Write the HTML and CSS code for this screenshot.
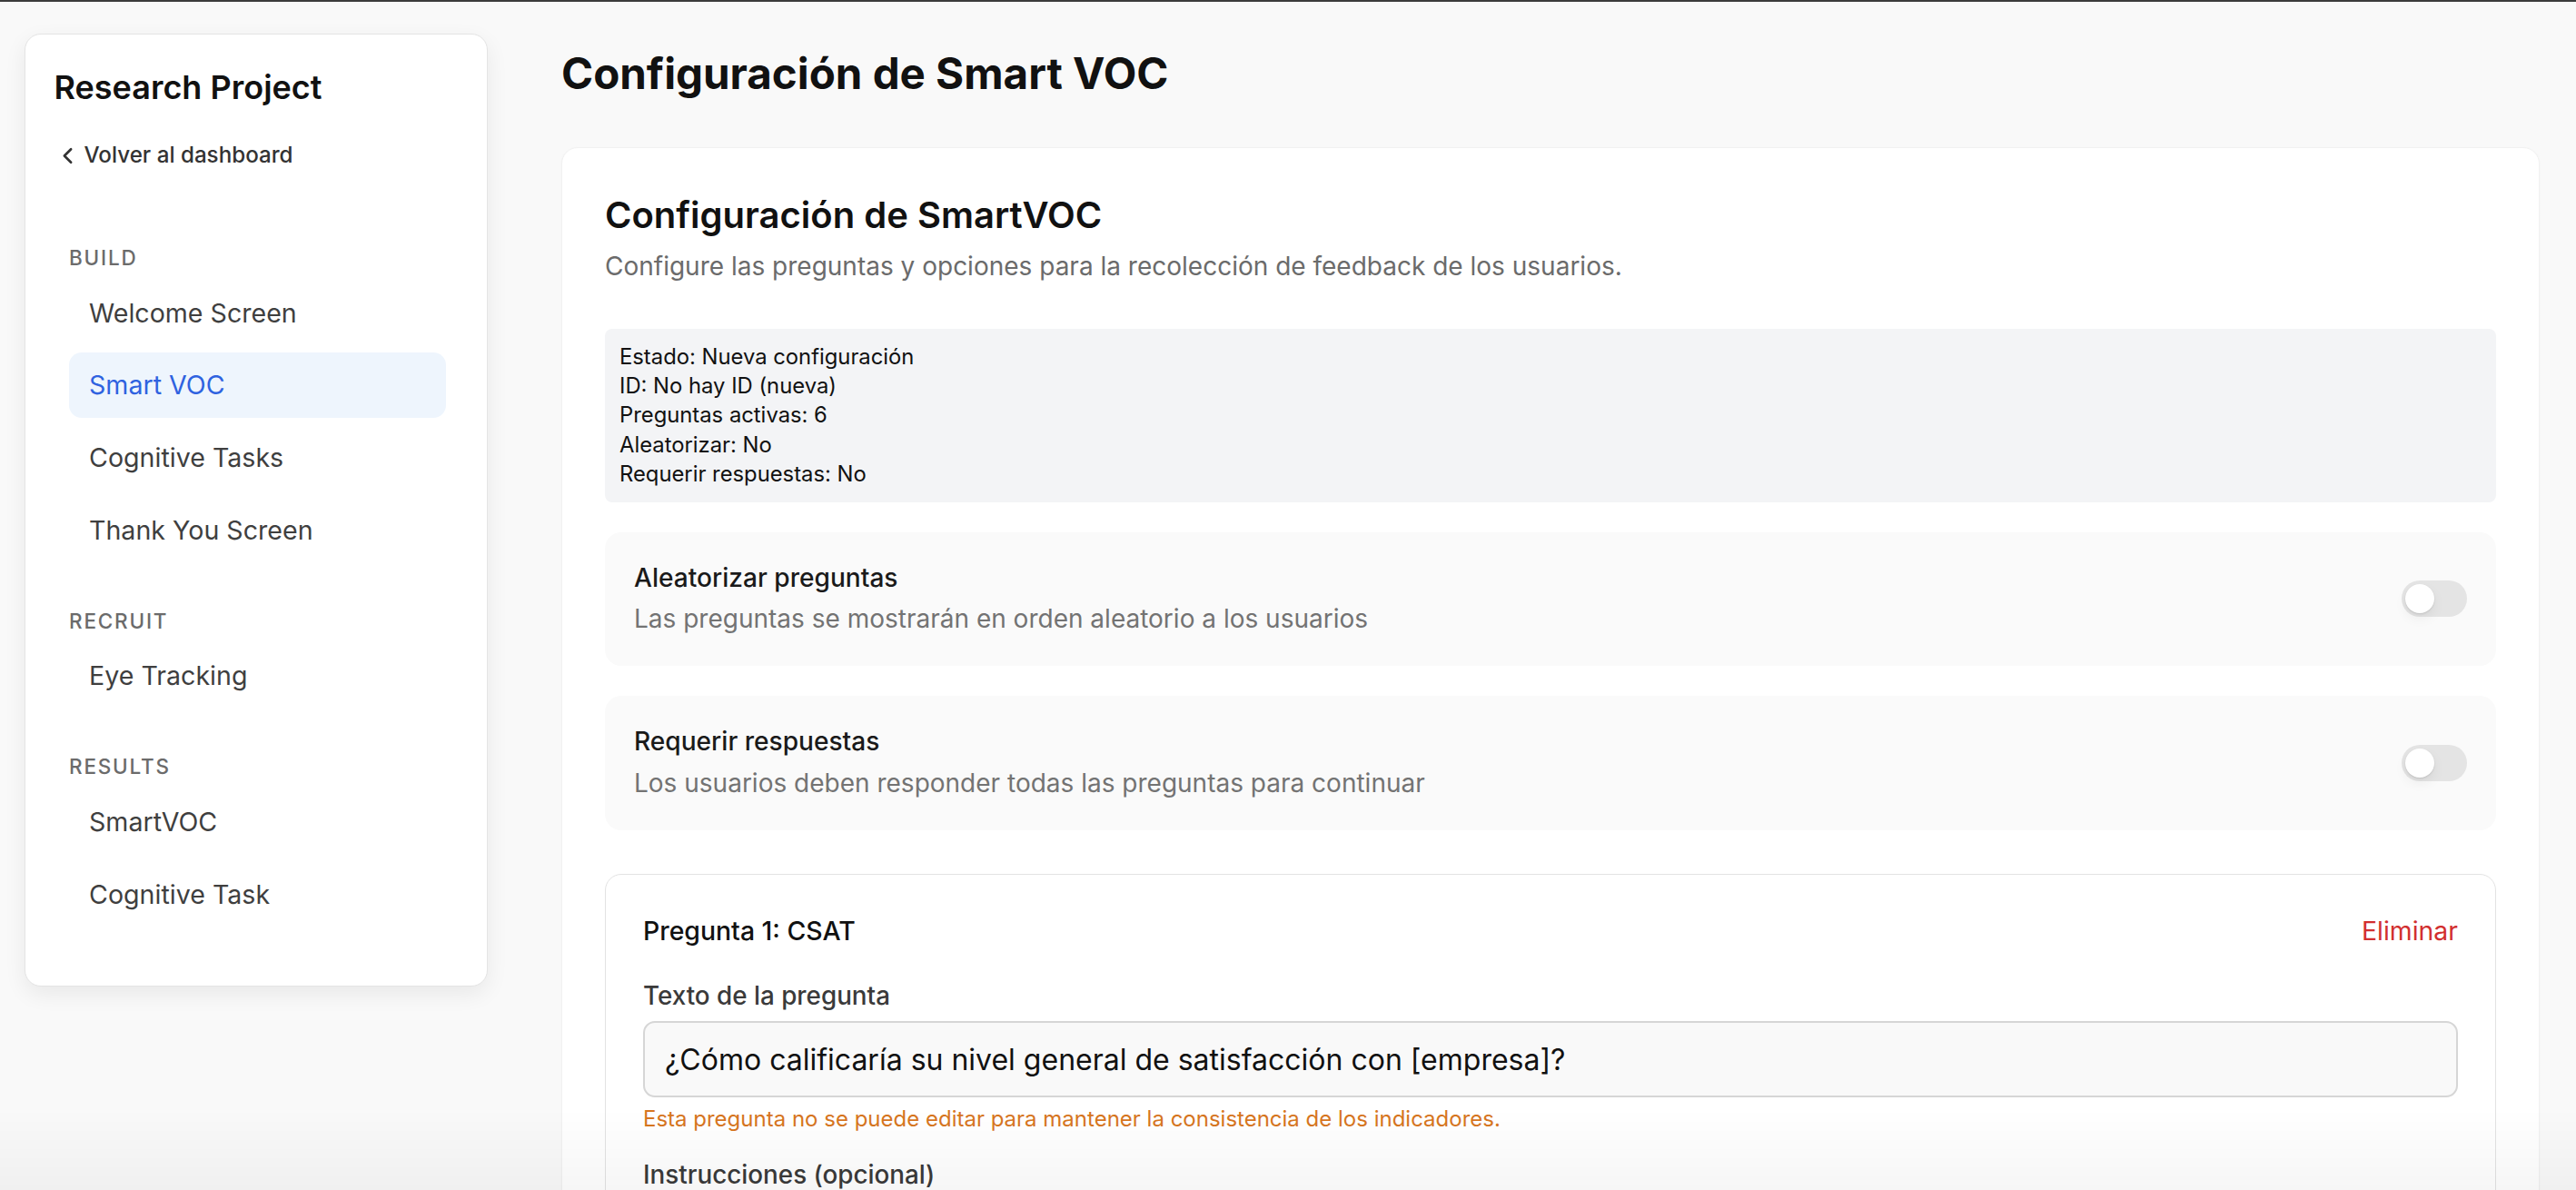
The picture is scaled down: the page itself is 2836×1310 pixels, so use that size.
FILE: index.html
```html
<!DOCTYPE html>
<html lang="es">
<head>
<meta charset="utf-8">
<title>Configuración de Smart VOC</title>
<link rel="stylesheet" href="styles.css">
</head>
<body>
<div class="topline"></div>
<div class="layout">
  <aside class="sidebar">
    <h2 class="sb-title">Research Project</h2>
    <a class="back" href="#">
      <svg class="back-icon" viewBox="0 0 24 24" fill="none" stroke="currentColor" stroke-width="2.2" stroke-linecap="round" stroke-linejoin="round"><path d="m15 18-6-6 6-6"/></svg>
      <span>Volver al dashboard</span>
    </a>
    <nav class="nav">
      <div class="group">
        <div class="group-label">BUILD</div>
        <a class="item" href="#">Welcome Screen</a>
        <a class="item active" href="#">Smart VOC</a>
        <a class="item" href="#">Cognitive Tasks</a>
        <a class="item" href="#">Thank You Screen</a>
      </div>
      <div class="group">
        <div class="group-label">RECRUIT</div>
        <a class="item" href="#">Eye Tracking</a>
      </div>
      <div class="group">
        <div class="group-label">RESULTS</div>
        <a class="item" href="#">SmartVOC</a>
        <a class="item" href="#">Cognitive Task</a>
      </div>
    </nav>
  </aside>

  <main class="main">
    <h1 class="page-title">Configuración de Smart VOC</h1>
    <section class="card">
      <h2 class="card-title">Configuración de SmartVOC</h2>
      <p class="card-sub">Configure las preguntas y opciones para la recolección de feedback de los usuarios.</p>

      <div class="status">
        <div>Estado: Nueva configuración</div>
        <div>ID: No hay ID (nueva)</div>
        <div>Preguntas activas: 6</div>
        <div>Aleatorizar: No</div>
        <div>Requerir respuestas: No</div>
      </div>

      <div class="opt">
        <div class="opt-text">
          <div class="opt-title">Aleatorizar preguntas</div>
          <div class="opt-desc">Las preguntas se mostrarán en orden aleatorio a los usuarios</div>
        </div>
        <span class="toggle"><span class="knob"></span></span>
      </div>

      <div class="opt">
        <div class="opt-text">
          <div class="opt-title">Requerir respuestas</div>
          <div class="opt-desc">Los usuarios deben responder todas las preguntas para continuar</div>
        </div>
        <span class="toggle"><span class="knob"></span></span>
      </div>

      <div class="q-card">
        <div class="q-head">
          <span class="q-name">Pregunta 1: CSAT</span>
          <a class="q-delete" href="#">Eliminar</a>
        </div>
        <label class="field-label">Texto de la pregunta</label>
        <input class="field-input" type="text" readonly value="¿Cómo calificaría su nivel general de satisfacción con [empresa]?">
        <p class="field-note">Esta pregunta no se puede editar para mantener la consistencia de los indicadores.</p>
        <label class="field-label field-label-gap">Instrucciones (opcional)</label>
        <textarea class="field-area" rows="3"></textarea>
      </div>
    </section>
  </main>
</div>
<div class="bottom-fade"></div>
</body>
</html>
```

FILE: styles.css
```css
* { box-sizing: border-box; }

html, body {
  margin: 0;
  padding: 0;
}

body {
  background: #f9f9f9;
  font-family: Inter, "Noto Sans", "Liberation Sans", sans-serif;
  color: #111;
  overflow: hidden;
}

.topline {
  height: 2px;
  background: #3c3c3c;
}

.layout {
  display: flex;
  align-items: flex-start;
  padding: 0 40px 0 27px;
}

/* Sidebar */
.sidebar {
  flex: 0 0 510px;
  width: 510px;
  margin-top: 35px;
  background: #fff;
  border: 1.5px solid #e4e4e4;
  border-radius: 18px;
  box-shadow: 0 8px 24px rgba(0, 0, 0, 0.07);
  padding: 33px 29px 65px 31.5px;
}

.sb-title {
  margin: 0;
  font-size: 36px;
  line-height: 50px;
  font-weight: 600;
  color: #111;
}

.back {
  display: flex;
  align-items: center;
  gap: 4px;
  margin-top: 32px;
  font-size: 24.2px;
  line-height: 36px;
  font-weight: 500;
  color: #333;
  text-decoration: none;
}

.back-icon {
  width: 29px;
  height: 29px;
  margin-left: 0;
  flex: 0 0 auto;
}

.nav {
  margin-top: 81px;
  display: flex;
  flex-direction: column;
  gap: 50.5px;
}

.group {
  display: flex;
  flex-direction: column;
  gap: 7.6px;
  padding: 0 16.5px;
}

.group-label {
  font-size: 22.5px;
  line-height: 28.8px;
  font-weight: 500;
  letter-spacing: 0.08em;
  color: #6b6b6b;
  margin-bottom: 2px;
}

.item {
  display: block;
  padding: 14.4px 22px;
  font-size: 28.6px;
  line-height: 43.2px;
  color: #3f3f3f;
  text-decoration: none;
  border-radius: 14px;
}

.item.active {
  background: #eef5fd;
  color: #2f62e0;
}

/* Main */
.main {
  flex: 1 1 auto;
  min-width: 0;
  margin-left: 81px;
}

.page-title {
  margin: 0;
  padding-top: 49.7px;
  font-size: 47.5px;
  line-height: 58px;
  font-weight: 700;
  color: #111;
}

.card {
  margin-top: 52px;
  background: #fff;
  border-radius: 18px;
  border: 1px solid #f1f1f1;
  box-shadow: 0 1px 3px rgba(0, 0, 0, 0.03);
  padding: 47px 47px 60px 47px;
}

.card-title {
  margin: 0;
  font-size: 40px;
  line-height: 53.3px;
  font-weight: 600;
  color: #111;
}

.card-sub {
  margin: 9px 0 0;
  font-size: 28px;
  line-height: 43.2px;
  color: #6b6b6b;
}

.status {
  margin-top: 47px;
  background: #f3f4f6;
  border-radius: 8px;
  padding: 14.4px 16px;
  font-size: 23.8px;
  line-height: 32.4px;
  color: #111;
}

.opt {
  margin-top: 33px;
  display: flex;
  align-items: center;
  justify-content: space-between;
  background: #fafafa;
  border-radius: 18px;
  padding: 29px 32px 30px 32px;
}

.opt + .opt {
  margin-top: 33px;
}

.opt-title {
  font-size: 28.1px;
  line-height: 43.2px;
  font-weight: 500;
  color: #1a1a1a;
}

.opt-desc {
  margin-top: 2px;
  font-size: 28px;
  line-height: 43.2px;
  color: #737373;
}

.toggle {
  position: relative;
  flex: 0 0 auto;
  width: 72px;
  height: 40px;
  border-radius: 20px;
  background: #e4e4e4;
}

.knob {
  position: absolute;
  left: 4px;
  top: 4px;
  width: 32px;
  height: 32px;
  border-radius: 50%;
  background: #fff;
  box-shadow: 0 1px 2px rgba(0, 0, 0, 0.12), 0 6px 14px rgba(0, 0, 0, 0.06);
}

/* Question card */
.q-card {
  margin-top: 48px;
  border: 1.5px solid #e3e3e3;
  border-radius: 18px;
  padding: 40px 41px 40px 41px;
}

.q-head {
  display: flex;
  justify-content: space-between;
  align-items: center;
  font-size: 28.4px;
  line-height: 43.2px;
}

.q-name {
  font-weight: 500;
  color: #111;
}

.q-delete {
  color: #d22f2f;
  text-decoration: none;
}

.field-label {
  display: block;
  margin-top: 32px;
  font-size: 27.8px;
  line-height: 36px;
  font-weight: 500;
  color: #3a3a3a;
}

.field-label-gap {
  margin-top: 25px;
}

.field-input {
  display: block;
  width: 100%;
  height: 84px;
  margin-top: 10px;
  border: 2px solid #d6d6d6;
  border-radius: 13px;
  background: #f9f9f9;
  padding: 0 22px;
  font-family: inherit;
  font-size: 32px;
  color: #111;
  outline: none;
}

.field-note {
  margin: 6px 0 0;
  font-size: 24px;
  line-height: 36px;
  color: #d7761f;
}

.field-area {
  display: block;
  width: 100%;
  margin-top: 10px;
  height: 140px;
  border: 2px solid #d6d6d6;
  border-radius: 13px;
  background: #fff;
  font-family: inherit;
  resize: none;
}

.bottom-fade {
  position: fixed;
  left: 0;
  right: 0;
  bottom: 0;
  height: 90px;
  background: linear-gradient(to bottom, rgba(0, 0, 0, 0), rgba(0, 0, 0, 0.035));
  pointer-events: none;
}
```
